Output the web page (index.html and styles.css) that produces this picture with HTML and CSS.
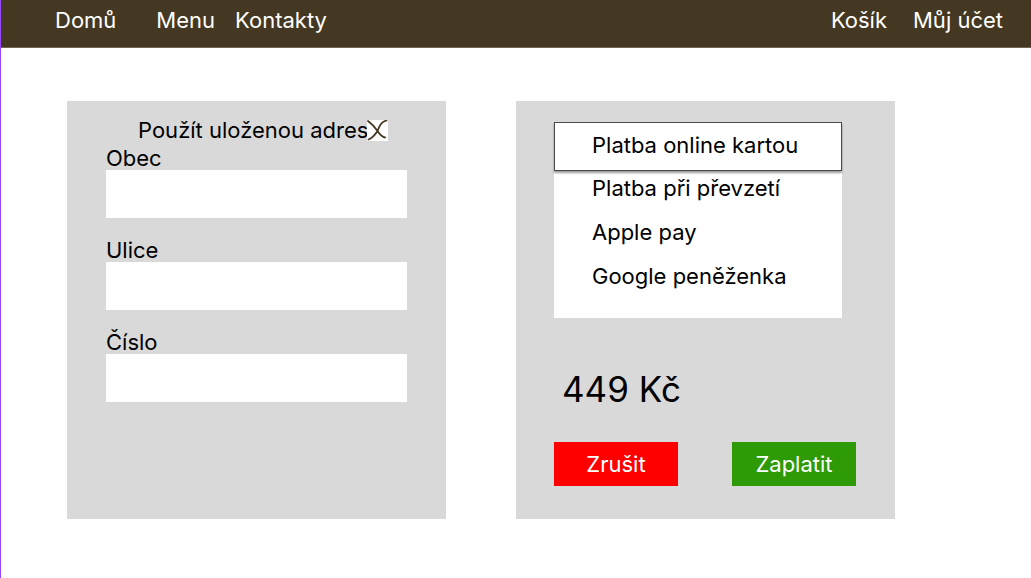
FILE: index.html
```html
<!DOCTYPE html>
<html lang="cs">
<head>
  <meta charset="utf-8">
  <meta name="viewport" content="width=device-width, initial-scale=1">
  <title>Platba</title>
  <link rel="stylesheet" href="styles.css">
</head>
<body class="page">
  <header class="topbar">
    <nav class="nav">
      <a class="nav-link nav-home" href="#">Domů</a>
      <a class="nav-link" href="#">Menu</a>
      <a class="nav-link" href="#">Kontakty</a>
    </nav>
    <nav class="nav nav-account">
      <a class="nav-link" href="#">Košík</a>
      <a class="nav-link" href="#">Můj účet</a>
    </nav>
  </header>
  <main class="checkout">
    <form class="card address">
      <div class="saved">
        <label for="saved">Použít uloženou adresu</label>
        <span class="check">
          <input class="check-input" type="checkbox" id="saved" checked>
          <svg class="check-mark" viewBox="0 0 21 21" aria-hidden="true">
            <path d="M1 1C5 4 8 7 10.500 11C12.500 14 14.500 17 18 17.500M19.500 0.500C14 2 12.500 6 10.500 11C8 15 5 18 1.500 19.500"/>
          </svg>
        </span>
      </div>
      <div class="fields">
        <div class="field">
          <label for="city">Obec</label>
          <input class="field-input" type="text" id="city">
        </div>
        <div class="field">
          <label for="street">Ulice</label>
          <input class="field-input" type="text" id="street">
        </div>
        <div class="field">
          <label for="number">Číslo</label>
          <input class="field-input" type="text" id="number">
        </div>
      </div>
    </form>
    <form class="card payment">
      <div class="methods" role="radiogroup">
        <label class="method"><input class="method-input" type="radio" name="method" checked>Platba online kartou</label>
        <label class="method"><input class="method-input" type="radio" name="method">Platba při převzetí</label>
        <label class="method"><input class="method-input" type="radio" name="method">Apple pay</label>
        <label class="method"><input class="method-input" type="radio" name="method">Google peněženka</label>
      </div>
      <p class="price">449 Kč</p>
      <div class="actions">
        <button class="button button-cancel" type="button">Zrušit</button>
        <button class="button button-pay" type="button">Zaplatit</button>
      </div>
    </form>
  </main>
</body>
</html>
```
FILE: styles.css
```css
* {
  box-sizing: border-box;
}

.page {
  margin: 0;
  min-height: 100vh;
  border-left: 1px solid #9747ff;
  background: #fff;
  color: #000;
  font: 400 22px/24px Inter, "Liberation Sans", sans-serif;
}

.topbar {
  display: flex;
  justify-content: space-between;
  padding: 8px 28px 15px 54px;
  background: #443822;
  border-bottom: 1px solid #6f6553;
}

.nav {
  display: flex;
  gap: 20px;
}

.nav-home {
  margin-right: 20px;
}

.nav-account {
  gap: 26px;
}

.nav-link {
  color: #fff;
  text-decoration: none;
}

.checkout {
  display: grid;
  grid-template-columns: 1fr 1fr;
  gap: 70px;
  padding: 53px 136px 59px 66px;
}

.card {
  min-width: 0;
  background: #d9d9d9;
}

.address {
  padding: 17px 39px 116px;
}

.saved {
  display: flex;
  align-items: center;
  margin: 0 20px 4px 32px;
  white-space: nowrap;
}

.check {
  position: relative;
  flex: none;
  width: 21px;
  height: 21px;
  margin-left: -14px;
}

.check-input {
  display: block;
  appearance: none;
  width: 100%;
  height: 100%;
  margin: 0;
  background: #fff;
}

.check-mark {
  position: absolute;
  inset: 0;
  fill: none;
  stroke: #443822;
  stroke-width: 1.8;
  stroke-linecap: round;
  pointer-events: none;
}

.check-input:not(:checked) + .check-mark {
  display: none;
}

.fields {
  display: grid;
  gap: 20px;
}

.field {
  display: grid;
}

.field-input {
  width: 100%;
  height: 48px;
  padding: 0 12px;
  border: 0;
  background: #fff;
  font: inherit;
}

.payment {
  padding: 21px 39px 33px 38px;
}

.methods {
  display: grid;
  gap: 20px;
  margin-right: 14px;
  padding-bottom: 30px;
  background: #fff;
}

.method {
  padding-left: 38px;
}

.method:has(:checked) {
  margin-bottom: -15px;
  padding: 10px 0 13px 37px;
  border: 1px solid #4a4a4a;
  box-shadow: 0 2px 2px rgba(0, 0, 0, 0.4);
}

.method-input {
  position: absolute;
  appearance: none;
  margin: 0;
}

.price {
  margin: 50px 8px 32px;
  font-size: 35px;
  line-height: 42px;
}

.actions {
  display: flex;
  justify-content: space-between;
}

.button {
  width: 124px;
  height: 44px;
  padding: 0;
  border: 0;
  color: #fff;
  font: inherit;
}

.button-cancel {
  background: #f00;
}

.button-pay {
  background: #2d9a06;
}
```
